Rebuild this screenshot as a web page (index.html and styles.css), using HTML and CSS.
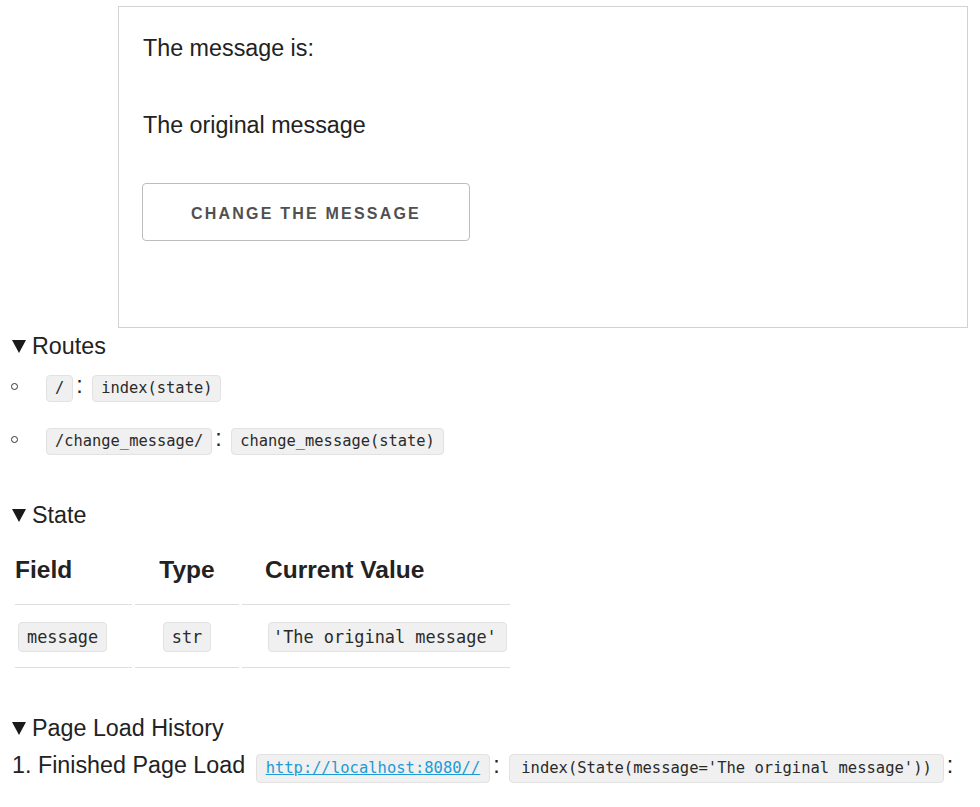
FILE: index.html
```html
<!DOCTYPE html>
<html>
<head>
<meta charset="utf-8">
<link rel="stylesheet" href="styles.css">
</head>
<body>
<div class="app">
  <p>The message is:</p>
  <p class="msg">The original message</p>
  <button class="btn">CHANGE THE MESSAGE</button>
</div>
<div class="devtools">
  <details open class="sec routes">
    <summary>Routes</summary>
    <ul class="route-list">
      <li><span class="route"><code>/</code>: <code>index(state)</code></span></li>
      <li><span class="route"><code>/change_message/</code>: <code>change_message(state)</code></span></li>
    </ul>
  </details>
  <details open class="sec state">
    <summary>State</summary>
    <table class="state-table">
      <thead>
        <tr><th class="c1">Field</th><th class="c2">Type</th><th class="c3">Current Value</th></tr>
      </thead>
      <tbody>
        <tr><td class="c1"><code>message</code></td><td class="c2"><code>str</code></td><td class="c3"><code class="val">'The original message'</code></td></tr>
      </tbody>
    </table>
  </details>
  <details open class="sec history">
    <summary>Page Load History</summary>
    <ol class="hist-list">
      <li>Finished Page Load <code class="url"><a href="#">http://localhost:8080//</a></code>: <code class="call">index(State(message='The original message'))</code>:</li>
    </ol>
  </details>
</div>
</body>
</html>
```

FILE: styles.css
```css
body {
  margin: 6px 8px 8px 8px;
  font-family: "Liberation Sans", Arial, sans-serif;
  font-size: 23.3px;
  color: #222;
  background: #fff;
}

.app {
  margin: 0 4px 0 110px;
  border: 1px solid #d2d2d2;
  padding: 28px 24px 86px 24px;
}

.app p {
  margin: 0;
  line-height: 26px;
}

.app .msg {
  margin-top: 51px;
}

.btn {
  display: block;
  margin-top: 45px;
  margin-left: -1px;
  width: 328px;
  height: 58px;
  border: 1px solid #bdbdbd;
  border-radius: 4px;
  background: #fff;
  font-family: "Liberation Sans", Arial, sans-serif;
  font-weight: bold;
  font-size: 16px;
  letter-spacing: 2.2px;
  color: #505050;
  padding: 4px 0 0 0;
}

.devtools {
  margin-left: 4px;
}

summary {
  line-height: 26px;
  list-style: none;
  display: flex;
  align-items: center;
}

summary::-webkit-details-marker {
  display: none;
}

summary::before {
  content: "";
  flex: none;
  width: 0;
  height: 0;
  border-left: 7.5px solid transparent;
  border-right: 7.5px solid transparent;
  border-top: 13px solid #1a1a1a;
  margin: 1px 6px 0 0;
}

.routes {
  margin-top: 5px;
}

code {
  display: inline-block;
  font-family: "DejaVu Sans Mono", "Liberation Mono", monospace;
  font-size: 15.4px;
  line-height: 19px;
  padding: 3px 8px;
  border: 1px solid #e2e2e2;
  border-radius: 4px;
  background: #f0f0f0;
  color: #2a2a2a;
  margin: 0 3px;
}

.route-list {
  margin: 13px 0 0 0;
  padding: 0;
  list-style: none;
}

.route-list li {
  display: flex;
  align-items: center;
  line-height: 27px;
}

.route-list li::before {
  content: "";
  flex: none;
  box-sizing: border-box;
  width: 7px;
  height: 7px;
  border: 1.4px solid #333;
  border-radius: 50%;
  margin: 0 28px 2px -1px;
}

.route-list li + li {
  margin-top: 23px;
}

.route code:first-child {
  margin-left: 0;
}

.state {
  margin-top: 47px;
}

.state-table {
  border-collapse: separate;
  border-spacing: 3px 0;
  margin-top: 2px;
}

.state-table th {
  font-size: 24.5px;
  font-weight: bold;
  line-height: 30px;
  padding: 25px 0 19px 0;
  border-bottom: 1px solid #dedede;
  box-sizing: border-box;
}

.state-table td {
  line-height: 30px;
  padding: 17px 0 15px 0;
  border-bottom: 1px solid #dedede;
  box-sizing: border-box;
}

.state-table code {
  font-size: 16.9px;
  line-height: 20px;
  padding: 4px 8px;
  margin: 0;
  vertical-align: top;
}

.state-table code.val {
  padding: 4px 0 4px 4px;
  width: 239px;
  box-sizing: border-box;
  white-space: nowrap;
}

.c1 {
  width: 117px;
  text-align: left;
}

td.c1 {
  padding-left: 3px;
}

.c2 {
  width: 104px;
  text-align: center;
}

.c3 {
  width: 268px;
  text-align: left;
}

th.c3 {
  padding-left: 23px;
}

td.c3 {
  padding-left: 26px;
}

.history {
  margin-top: 47px;
}

.hist-list {
  margin: 10px 0 0 0;
  padding: 0;
  list-style: decimal inside;
}

.hist-list li {
  line-height: 29px;
}

.hist-list code {
  font-size: 15.5px;
  padding: 4px 9px;
}

.hist-list code.url {
  margin-left: 4px;
}

.hist-list code.call {
  padding: 4px 11px;
}

.hist-list a {
  color: #1d9bd6;
  text-decoration: underline;
}
```
